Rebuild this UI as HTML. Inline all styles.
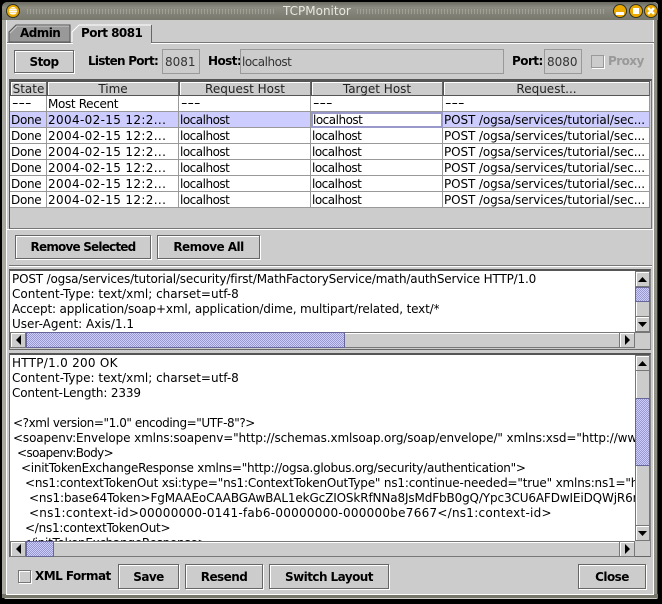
<!DOCTYPE html>
<html><head><meta charset="utf-8"><style>
html,body{margin:0;padding:0;background:#000;}
#w{position:relative;width:662px;height:604px;overflow:hidden;background:#ccc;font-family:"DejaVu Sans",sans-serif;font-size:12px;color:#000;}
#w div,#w span{position:absolute;box-sizing:border-box;white-space:nowrap;}
.t{overflow:hidden;line-height:16px;height:16px;}
.b{font-weight:bold;font-family:"DejaVu Sans",sans-serif;font-size:12px;letter-spacing:-.55px;}
.btn{background:#ccc;border:1px solid #666;box-shadow:1px 1px 0 #fff,inset 1px 1px 0 #fff;text-align:center;font-weight:bold;font-size:12px;letter-spacing:-.55px;}
.fld{border:1px solid #999;background:#ccc;color:#333;padding-left:2px;}
.hd{height:15px;background:#ccc;border:1px solid #555;border-right-color:#666;box-shadow:inset 1px 1px 0 #fff;text-align:center;line-height:14px;color:#222;}
.c{height:16px;border-right:1px solid #999;border-bottom:1px solid #999;line-height:16px;padding-left:1px;overflow:hidden;}
.ti{letter-spacing:.35px}.lh{letter-spacing:-.5px}.dn{letter-spacing:-.3px}.po{letter-spacing:-.1px}
.c span.da{left:2px;top:0;transform:scaleX(1.5);transform-origin:0 0;line-height:15px}
.thumb{background-color:#a4a4d8;background-image:conic-gradient(#ccf 25%,#9999cc 0 50%,#ccf 0 75%,#9999cc 0);background-size:2px 2px;border:1px solid #666699;}
.sb{background:#ccc;border:1px solid #777;box-shadow:inset 1px 1px 0 #fff;}
.ab{background:#ccc;border:1px solid #777;box-shadow:inset 1px 1px 0 #fff;}
.x{white-space:pre;}
</style></head><body><div id="w">
<!-- frame -->
<div style="left:0;top:0;width:662px;height:604px;background:#000"></div>
<div style="left:4px;top:2px;width:654px;height:597px;background:#cfcfc8;border-radius:4px 4px 2px 2px"></div>
<div style="left:2px;top:2px;width:656px;height:18px;background:linear-gradient(#6a6a60,#8c8c82 30%,#77776c);border-radius:5px 5px 0 0"></div>
<div style="left:2px;top:20px;width:5px;height:578px;background:#a8a8a0"></div>
<div style="left:653px;top:20px;width:5px;height:578px;background:#8f8f85;border-right:1px solid #333"></div>
<div style="left:2px;top:594px;width:656px;height:4px;background:#77776c"></div>
<div style="left:6px;top:20px;width:648px;height:575px;background:#ccc;border:1px solid #fff;border-top:none"></div>
<!-- title -->
<div style="left:26px;top:9px;width:248px;height:5px;background-image:radial-gradient(circle,#b5b5a8 0.7px,transparent 0.8px);background-size:3px 2px"></div>
<div style="left:356px;top:9px;width:249px;height:5px;background-image:radial-gradient(circle,#b5b5a8 0.7px,transparent 0.8px);background-size:3px 2px"></div>
<div style="left:283px;top:2px;height:18px;line-height:18px;color:#e8e8e0;font-size:12px">TCPMonitor</div>
<div style="left:6px;top:4px;width:14px;height:14px;border-radius:50%;background:#eba900;border:1px solid #332"></div>
<div style="left:9px;top:7px;width:8px;height:8px;border-radius:50%;background:repeating-linear-gradient(#fff 0 1px,#ffdf90 1px 2px)"></div>
<div style="left:613px;top:4px;width:14px;height:14px;border-radius:50%;background:#eba900;border:1px solid #332"></div>
<div style="left:616px;top:12px;width:8px;height:3px;background:#fff"></div>
<div style="left:629px;top:4px;width:14px;height:14px;border-radius:50%;background:#eba900;border:1px solid #332"></div>
<div style="left:633px;top:8px;width:6px;height:6px;background:#fff"></div>
<div style="left:644px;top:4px;width:14px;height:14px;border-radius:50%;background:#eba900;border:1px solid #332"></div>
<svg style="position:absolute;left:644px;top:4px" width="14" height="14"><path d="M4 4L10 10M10 4L4 10" stroke="#fff" stroke-width="2.4"/></svg>
<!-- tabs -->
<div style="left:7px;top:42px;width:647px;height:1px;background:#777"></div>
<div style="left:7px;top:43px;width:647px;height:1px;background:#fff"></div>
<svg style="position:absolute;left:8px;top:24px" width="146" height="20"><path d="M1 18V8L8 1H62V18Z" fill="#999" stroke="#555"/><path d="M2 9L9 2H61" fill="none" stroke="#ccc"/><path d="M64 18V8L71 0H143V18" fill="#ccc"/><path d="M64 19V8L71 1H143" fill="none" stroke="#fff"/><path d="M143.500 1V19" stroke="#666"/><rect x="65" y="17" width="78" height="3" fill="#ccc"/></svg>
<div class="b" style="left:20px;top:25px;line-height:17px">Admin</div>
<div class="b" style="left:81px;top:25px;line-height:17px">Port 8081</div>
<!-- top row -->
<div class="btn" style="left:14px;top:50px;width:60px;height:23px;line-height:22px">Stop</div>
<div class="b" style="left:88px;top:50px;line-height:23px;letter-spacing:-.75px">Listen Port:</div>
<div class="fld" style="left:162px;top:49px;width:38px;height:25px;line-height:24px">8081</div>
<div class="b" style="left:208px;top:50px;line-height:23px">Host:</div>
<div class="fld lh" style="left:240px;top:49px;width:264px;height:25px;line-height:24px;padding-left:1px">localhost</div>
<div class="b" style="left:512px;top:50px;line-height:23px">Port:</div>
<div class="fld" style="left:544px;top:49px;width:38px;height:25px;line-height:24px">8080</div>
<div style="left:591px;top:55px;width:13px;height:13px;border:1px solid #999;box-shadow:1px 1px 0 #fff"></div>
<div class="b" style="left:608px;top:50px;line-height:23px;color:#999">Proxy</div>
<!-- table -->
<div style="left:9px;top:79px;width:643px;height:150px;background:#ccc;border:1px solid #777;border-top:2px solid #555;border-left:1px solid #555"></div>
<div class="hd" style="left:10px;top:81px;width:37px">State</div>
<div class="hd" style="left:47px;top:81px;width:132px">Time</div>
<div class="hd" style="left:179px;top:81px;width:132px">Request Host</div>
<div class="hd" style="left:311px;top:81px;width:132px">Target Host</div>
<div class="hd" style="left:443px;top:81px;width:207px">Request...</div>
<!-- rows -->
<div style="left:10px;top:96px;width:640px;height:112px;background:#fff"></div>
<div style="left:10px;top:112px;width:640px;height:16px;background:#ccf"></div>

<div class="c" style="left:10px;top:96px;width:37px"><span class="da">---</span></div><div class="c" style="left:47px;top:96px;width:132px;letter-spacing:-.35px">Most Recent</div><div class="c" style="left:179px;top:96px;width:132px"><span class="da">---</span></div><div class="c" style="left:311px;top:96px;width:132px"><span class="da">---</span></div><div class="c" style="left:443px;top:96px;width:207px"><span class="da">---</span></div>

<div class="c dn" style="left:10px;top:112px;width:37px">Done</div><div class="c ti" style="left:47px;top:112px;width:132px">2004-02-15 12:2...</div><div class="c lh" style="left:179px;top:112px;width:132px">localhost</div><div class="c lh" style="left:311px;top:112px;width:132px;background:#fff;border:2px solid #9999cc;line-height:12px;padding-left:0">localhost</div><div class="c po" style="left:443px;top:112px;width:207px">POST /ogsa/services/tutorial/sec...</div>

<div class="c dn" style="left:10px;top:128px;width:37px">Done</div><div class="c ti" style="left:47px;top:128px;width:132px">2004-02-15 12:2...</div><div class="c lh" style="left:179px;top:128px;width:132px">localhost</div><div class="c lh" style="left:311px;top:128px;width:132px">localhost</div><div class="c po" style="left:443px;top:128px;width:207px">POST /ogsa/services/tutorial/sec...</div>

<div class="c dn" style="left:10px;top:144px;width:37px">Done</div><div class="c ti" style="left:47px;top:144px;width:132px">2004-02-15 12:2...</div><div class="c lh" style="left:179px;top:144px;width:132px">localhost</div><div class="c lh" style="left:311px;top:144px;width:132px">localhost</div><div class="c po" style="left:443px;top:144px;width:207px">POST /ogsa/services/tutorial/sec...</div>

<div class="c dn" style="left:10px;top:160px;width:37px">Done</div><div class="c ti" style="left:47px;top:160px;width:132px">2004-02-15 12:2...</div><div class="c lh" style="left:179px;top:160px;width:132px">localhost</div><div class="c lh" style="left:311px;top:160px;width:132px">localhost</div><div class="c po" style="left:443px;top:160px;width:207px">POST /ogsa/services/tutorial/sec...</div>

<div class="c dn" style="left:10px;top:176px;width:37px">Done</div><div class="c ti" style="left:47px;top:176px;width:132px">2004-02-15 12:2...</div><div class="c lh" style="left:179px;top:176px;width:132px">localhost</div><div class="c lh" style="left:311px;top:176px;width:132px">localhost</div><div class="c po" style="left:443px;top:176px;width:207px">POST /ogsa/services/tutorial/sec...</div>

<div class="c dn" style="left:10px;top:192px;width:37px">Done</div><div class="c ti" style="left:47px;top:192px;width:132px">2004-02-15 12:2...</div><div class="c lh" style="left:179px;top:192px;width:132px">localhost</div><div class="c lh" style="left:311px;top:192px;width:132px">localhost</div><div class="c po" style="left:443px;top:192px;width:207px">POST /ogsa/services/tutorial/sec...</div>

<div style="left:7px;top:229px;width:647px;height:1px;background:#fff"></div>
<!-- remove buttons -->
<div class="btn" style="left:15px;top:235px;width:136px;height:24px;line-height:23px;letter-spacing:-.8px">Remove Selected</div>
<div class="btn" style="left:157px;top:235px;width:103px;height:24px;line-height:23px">Remove All</div>
<div style="left:9px;top:265px;width:643px;height:1px;background:#777"></div>
<div style="left:9px;top:266px;width:643px;height:1px;background:#fff"></div>
<!-- request pane -->
<div style="left:9px;top:269px;width:642px;height:81px;background:#ccc;border:1px solid #666;border-top:2px solid #555;border-right-color:#888"></div>
<div style="left:10px;top:271px;width:625px;height:61px;background:#fff;overflow:hidden">
<div class="t x" style="left:2px;top:0;letter-spacing:-.17px">POST /ogsa/services/tutorial/security/first/MathFactoryService/math/authService HTTP/1.0</div>
<div class="t x" style="left:2px;top:15px">Content-Type: text/xml; charset=utf-8</div>
<div class="t x" style="left:2px;top:30px;letter-spacing:-.15px">Accept: application/soap+xml, application/dime, multipart/related, text/*</div>
<div class="t x" style="left:2px;top:45px">User-Agent: Axis/1.1</div>
</div>
<!-- v scroll top -->
<div class="sb" style="left:635px;top:271px;width:15px;height:62px"></div>
<div class="ab" style="left:635px;top:271px;width:15px;height:16px"></div>
<svg style="position:absolute;left:635px;top:271px" width="15" height="16"><path d="M3 11H12L7.500 6Z" fill="#000"/></svg>
<div class="thumb" style="left:635px;top:287px;width:15px;height:15px"></div>
<div class="ab" style="left:635px;top:316px;width:15px;height:16px"></div>
<svg style="position:absolute;left:635px;top:316px" width="15" height="16"><path d="M3 6H12L7.500 11Z" fill="#000"/></svg>
<!-- h scroll top -->
<div class="sb" style="left:10px;top:332px;width:625px;height:16px"></div>
<div class="ab" style="left:10px;top:332px;width:16px;height:16px"></div>
<svg style="position:absolute;left:10px;top:332px" width="16" height="16"><path d="M11 3V13L6 8Z" fill="#000"/></svg>
<div class="thumb" style="left:26px;top:332px;width:319px;height:16px"></div>
<div class="ab" style="left:619px;top:332px;width:16px;height:16px"></div>
<svg style="position:absolute;left:619px;top:332px" width="16" height="16"><path d="M6 3V13L11 8Z" fill="#000"/></svg>
<!-- response pane -->
<div style="left:9px;top:353px;width:642px;height:204px;background:#ccc;border:1px solid #666;border-top:2px solid #555;border-right-color:#888"></div>
<div style="left:10px;top:355px;width:625px;height:186px;background:#fff;overflow:hidden">
<div class="t x" style="left:2px;top:0;letter-spacing:.27px">HTTP/1.0 200 OK</div>
<div class="t x" style="left:2px;top:15px">Content-Type: text/xml; charset=utf-8</div>
<div class="t x" style="left:2px;top:30px;letter-spacing:-.15px">Content-Length: 2339</div>
<div class="t x" style="left:3px;top:60px;width:620px;letter-spacing:-.42px">&lt;?xml version="1.0" encoding="UTF-8"?&gt;</div>
<div class="t x" style="left:3px;top:75px;width:622px;letter-spacing:-.12px">&lt;soapenv:Envelope xmlns:soapenv="http://schemas.xmlsoap.org/soap/envelope/" xmlns:xsd="http://www.w3.org/2001/XMLSchema"</div>
<div class="t x" style="left:7px;top:90px;letter-spacing:-.6px">&lt;soapenv:Body&gt;</div>
<div class="t x" style="left:11px;top:105px;letter-spacing:-.26px">&lt;initTokenExchangeResponse xmlns="http://ogsa.globus.org/security/authentication"&gt;</div>
<div class="t x" style="left:15px;top:120px;width:610px;letter-spacing:-.18px">&lt;ns1:contextTokenOut xsi:type="ns1:ContextTokenOutType" ns1:continue-needed="true" xmlns:ns1="http://ogsa"</div>
<div class="t x" style="left:19px;top:135px;width:606px;letter-spacing:-.13px">&lt;ns1:base64Token&gt;FgMAAEoCAABGAwBAL1ekGcZIOSkRfNNa8JsMdFbB0gQ/Ypc3CU6AFDwIEiDQWjR6mYx</div>
<div class="t x" style="left:19px;top:150px;letter-spacing:.25px">&lt;ns1:context-id&gt;00000000-0141-fab6-00000000-000000be7667&lt;/ns1:context-id&gt;</div>
<div class="t x" style="left:15px;top:165px;letter-spacing:-.25px">&lt;/ns1:contextTokenOut&gt;</div>
<div class="t x" style="left:11px;top:180px;letter-spacing:-.26px">&lt;/initTokenExchangeResponse&gt;</div>
</div>
<!-- v scroll bottom -->
<div class="sb" style="left:635px;top:355px;width:15px;height:186px"></div>
<div class="ab" style="left:635px;top:355px;width:15px;height:16px"></div>
<svg style="position:absolute;left:635px;top:355px" width="15" height="16"><path d="M3 11H12L7.500 6Z" fill="#000"/></svg>
<div class="thumb" style="left:635px;top:398px;width:15px;height:68px"></div>
<div class="ab" style="left:635px;top:525px;width:15px;height:16px"></div>
<svg style="position:absolute;left:635px;top:525px" width="15" height="16"><path d="M3 6H12L7.500 11Z" fill="#000"/></svg>
<!-- h scroll bottom -->
<div class="sb" style="left:10px;top:541px;width:625px;height:16px"></div>
<div class="ab" style="left:10px;top:541px;width:16px;height:16px"></div>
<svg style="position:absolute;left:10px;top:541px" width="16" height="16"><path d="M11 3V13L6 8Z" fill="#000"/></svg>
<div class="thumb" style="left:26px;top:541px;width:28px;height:16px"></div>
<div class="ab" style="left:619px;top:541px;width:16px;height:16px"></div>
<svg style="position:absolute;left:619px;top:541px" width="16" height="16"><path d="M6 3V13L11 8Z" fill="#000"/></svg>
<!-- bottom -->
<div style="left:18px;top:570px;width:13px;height:13px;border:1px solid #777;box-shadow:1px 1px 0 #fff,inset 1px 1px 0 #fff"></div>
<div class="b" style="left:35px;top:565px;line-height:23px">XML Format</div>
<div class="btn" style="left:118px;top:564px;width:61px;height:25px;line-height:24px">Save</div>
<div class="btn" style="left:185px;top:564px;width:78px;height:25px;line-height:24px">Resend</div>
<div class="btn" style="left:269px;top:564px;width:120px;height:25px;line-height:24px">Switch Layout</div>
<div class="btn" style="left:578px;top:564px;width:68px;height:25px;line-height:24px">Close</div>
</div></body></html>
